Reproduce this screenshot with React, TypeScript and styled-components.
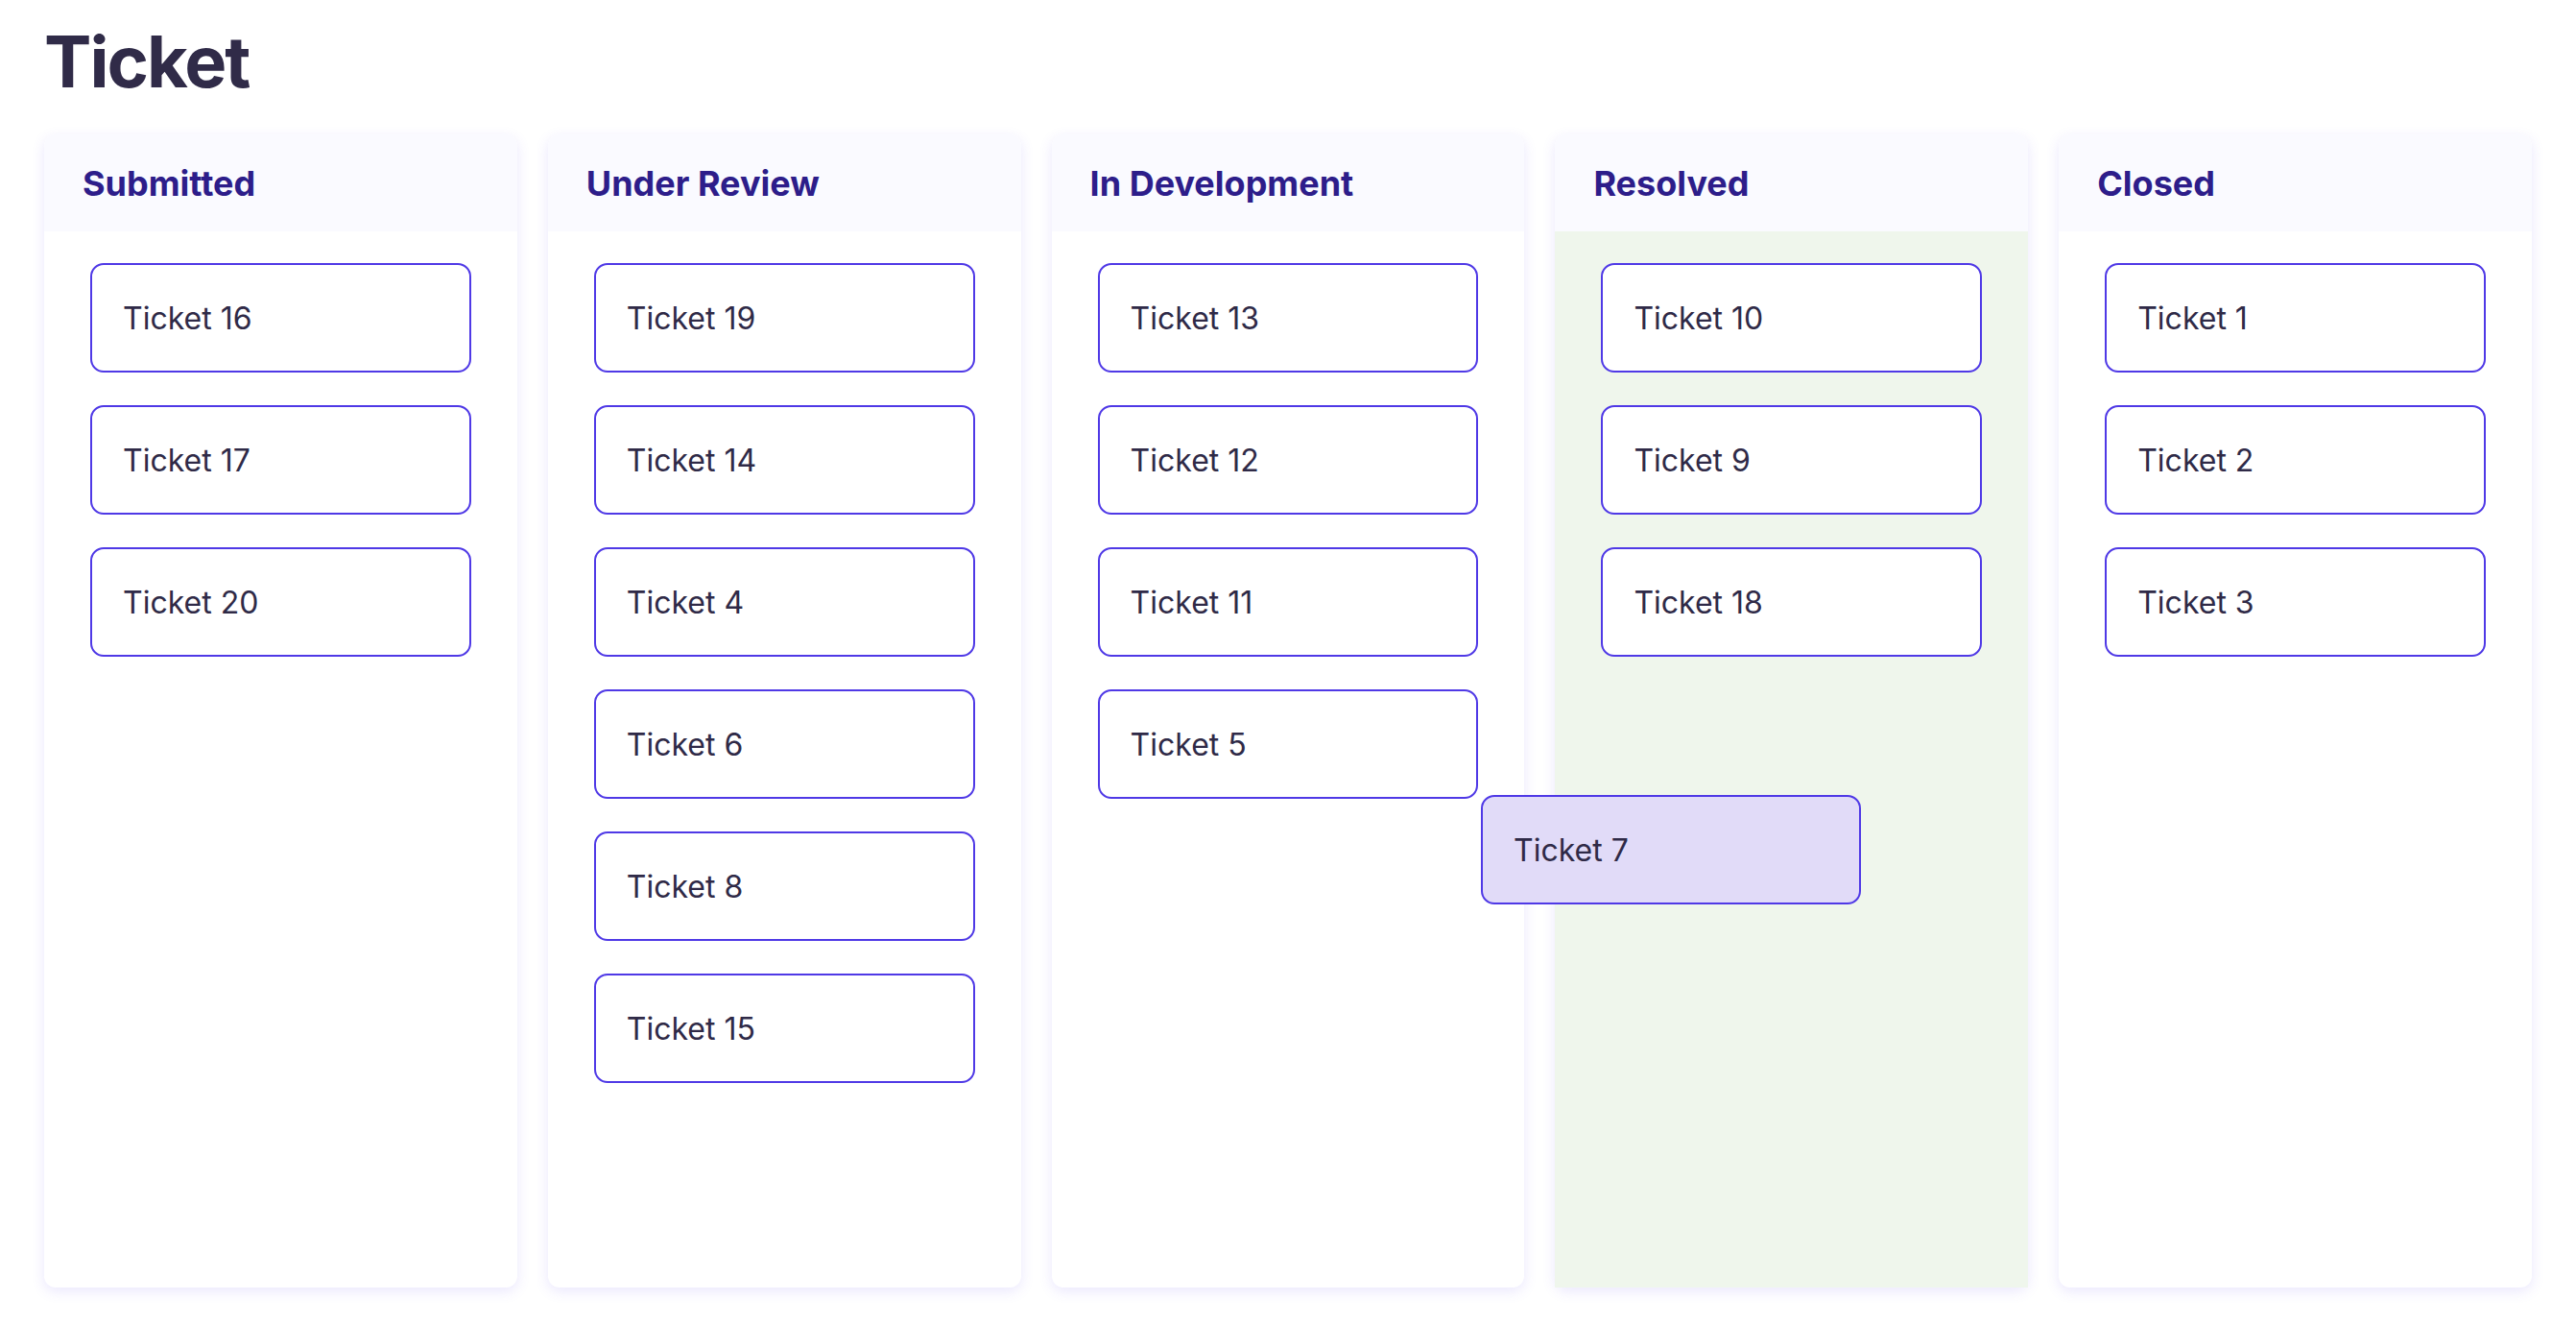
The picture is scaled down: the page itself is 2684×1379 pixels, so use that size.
import styled, { createGlobalStyle } from 'styled-components';

const GlobalStyle = createGlobalStyle`
  * {
    box-sizing: border-box;
  }

  body {
    margin: 0;
    background: #ffffff;
    font-family: Inter, "Noto Sans", "Liberation Sans", sans-serif;
  }
`;

const Page = styled.main`
  position: relative;
  padding: 27px 46px 38px;
`;

const Title = styled.h1`
  margin: 0 0 39px;
  font-size: 74px;
  line-height: 74px;
  font-weight: 700;
  color: #302b48;
  letter-spacing: -2px;
`;

const Board = styled.div`
  display: grid;
  grid-template-columns: repeat(5, 1fr);
  gap: 32px;
`;

const Column = styled.section`
  height: 1201px;
  display: flex;
  flex-direction: column;
  background: #ffffff;
  border-radius: 12px;
  box-shadow: 0 4px 14px rgba(90, 70, 240, 0.13);
`;

const ColumnHeader = styled.header`
  height: 101px;
  flex-shrink: 0;
  display: flex;
  align-items: center;
  padding: 0 40px;
  background: #fafaff;
  border-radius: 12px 12px 0 0;

  h2 {
    margin: 0;
    font-size: 36px;
    font-weight: 700;
    color: #2d1d8a;
  }
`;

const ColumnBody = styled.div<{ $over?: boolean }>`
  flex: 1;
  display: flex;
  flex-direction: column;
  gap: 34px;
  padding: 33px 48px;
  background: ${(p) => (p.$over ? '#eff6ec' : 'transparent')};
`;

const Card = styled.div<{ $dragging?: boolean }>`
  height: 114px;
  display: flex;
  align-items: center;
  padding: 0 32px;
  border: 2px solid #4f39e6;
  border-radius: 14px;
  background: ${(p) => (p.$dragging ? '#e1dbf8' : '#ffffff')};
  font-size: 32px;
  color: #2f2a47;
`;

const DragLayer = styled.div`
  position: absolute;
  left: 1543px;
  top: 828px;
  width: 396px;
  z-index: 10;
`;

const columns = [
  { title: 'Submitted', tickets: [16, 17, 20] },
  { title: 'Under Review', tickets: [19, 14, 4, 6, 8, 15] },
  { title: 'In Development', tickets: [13, 12, 11, 5] },
  { title: 'Resolved', tickets: [10, 9, 18], over: true },
  { title: 'Closed', tickets: [1, 2, 3] },
];

const App = () => {
  return (
    <>
      <GlobalStyle />
      <Page>
        <Title>Ticket</Title>
        <Board>
          {columns.map((col) => (
            <Column key={col.title}>
              <ColumnHeader>
                <h2>{col.title}</h2>
              </ColumnHeader>
              <ColumnBody $over={col.over}>
                {col.tickets.map((id) => (
                  <Card key={id}>Ticket {id}</Card>
                ))}
              </ColumnBody>
            </Column>
          ))}
        </Board>
        <DragLayer>
          <Card $dragging>Ticket 7</Card>
        </DragLayer>
      </Page>
    </>
  );
};

export default App;
